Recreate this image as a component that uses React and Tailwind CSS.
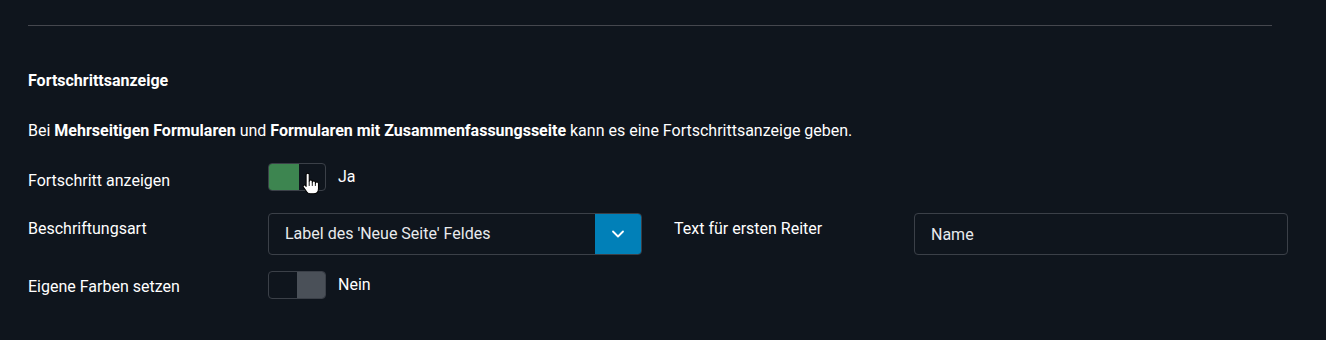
import React, { useState } from 'react';
import { ChevronDown } from 'lucide-react';

function Toggle({ on, onChange }) {
  return (
    <button
      type="button"
      onClick={() => onChange(!on)}
      className="flex h-[28px] w-[58px] shrink-0 overflow-hidden rounded-[4px] border border-[#3b4048] bg-[#0f151d] p-0 cursor-pointer"
    >
      {on ? (
        <>
          <span className="block h-full w-[30px] bg-[#3d8550]" />
          <span className="block h-full flex-1" />
        </>
      ) : (
        <>
          <span className="block h-full w-[28px]" />
          <span className="block h-full flex-1 bg-[#4a5058]" />
        </>
      )}
    </button>
  );
}

// mouse pointer visible in the screenshot
function HandCursor() {
  return (
    <svg
      width="18"
      height="23"
      viewBox="0 0 17.5 22"
      className="pointer-events-none absolute left-[34px] top-[9px]"
    >
      <path
        d="M4 2.5a1.5 1.5 0 0 1 3 0V9a1.5 1.5 0 0 1 3 0v1a1.5 1.5 0 0 1 3 0v1a1.5 1.5 0 0 1 3 0v5c0 3-2 5-5 5H8c-1.5 0-2.5-.7-3.3-1.8L1.3 14.5a1.3 1.3 0 0 1 2-1.6L4 13.8Z"
        fill="#fff"
        stroke="#000"
        strokeWidth="1"
        strokeLinejoin="round"
      />
      <path d="M7 9.5v3.5M10 10.5v2.5M13 11.5v1.5" stroke="#000" strokeWidth="0.9" strokeLinecap="round" />
    </svg>
  );
}

export default function App() {
  const [showProgress, setShowProgress] = useState(true);
  const [ownColors, setOwnColors] = useState(false);
  const [labelType, setLabelType] = useState("page");
  const [firstTab, setFirstTab] = useState("Name");

  return (
    <div
      className="min-h-[340px] w-full bg-[#0f151d] text-white"
      style={{ fontFamily: 'Roboto, "Liberation Sans", sans-serif' }}
    >
      <div className="px-[28px] pt-[25px]">
        {/* divider */}
        <div className="mr-[26px] h-px bg-[#45474e]" />

        {/* section header */}
        <h3 className="mt-[45px] text-[16px] font-bold leading-[20px] text-white">Fortschrittsanzeige</h3>
        <p className="mt-[30px] text-[16px] leading-[20px] text-white">
          Bei <strong className="font-bold">Mehrseitigen Formularen</strong> und{' '}
          <strong className="font-bold">Formularen mit Zusammenfassungsseite</strong> kann es eine Fortschrittsanzeige geben.
        </p>

        {/* Fortschritt anzeigen */}
        <div className="mt-[22px] flex items-start">
          <label className="w-[240px] shrink-0 pt-[8px] text-[16px] leading-[20px] text-white">Fortschritt anzeigen</label>
          <div className="relative flex items-center">
            <Toggle on={showProgress} onChange={setShowProgress} />
            <HandCursor />
            <span className="ml-[12px] text-[16px] leading-[20px] text-white">{showProgress ? "Ja" : "Nein"}</span>
          </div>
        </div>

        {/* Beschriftungsart + Text für ersten Reiter */}
        <div className="mt-[22px] flex items-start">
          <label className="w-[240px] shrink-0 pt-[6px] text-[16px] leading-[20px] text-white">Beschriftungsart</label>
          <div className="relative flex h-[42px] w-[374px] shrink-0 overflow-hidden rounded-[4px] border border-[#3b4048]">
            <select
              value={labelType}
              onChange={(e) => setLabelType(e.target.value)}
              className="h-full flex-1 appearance-none bg-transparent pl-[16px] text-[16px] text-[#e8eaed] focus:outline-none"
            >
              <option value="page">Label des 'Neue Seite' Feldes</option>
              <option value="number">Seitennummer</option>
            </select>
            <span className="pointer-events-none flex h-full w-[46px] items-center justify-center bg-[#0180b8]">
              <ChevronDown className="h-5 w-5 text-white" strokeWidth={2.2} />
            </span>
          </div>

          <label className="ml-[32px] w-[240px] shrink-0 pt-[6px] text-[16px] leading-[20px] text-white">Text für ersten Reiter</label>
          <input
            type="text"
            value={firstTab}
            onChange={(e) => setFirstTab(e.target.value)}
            className="h-[42px] w-[374px] shrink-0 rounded-[4px] border border-[#3b4048] bg-transparent px-[16px] text-[16px] text-[#e8eaed] focus:outline-none"
          />
        </div>

        {/* Eigene Farben setzen */}
        <div className="mt-[16px] flex items-start">
          <label className="w-[240px] shrink-0 pt-[6px] text-[16px] leading-[20px] text-white">Eigene Farben setzen</label>
          <div className="flex items-center">
            <Toggle on={ownColors} onChange={setOwnColors} />
            <span className="ml-[12px] text-[16px] leading-[20px] text-white">{ownColors ? "Ja" : "Nein"}</span>
          </div>
        </div>
      </div>
    </div>
  );
}
